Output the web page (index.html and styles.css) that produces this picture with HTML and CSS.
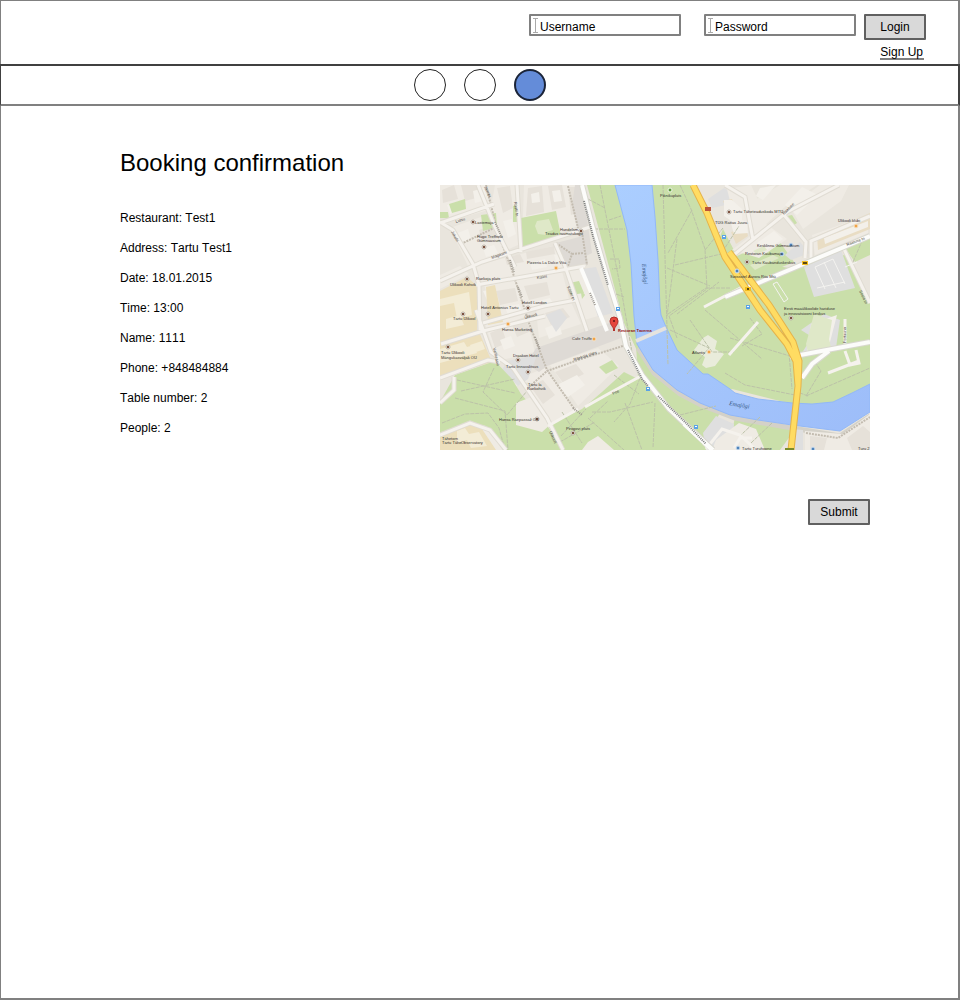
FILE: index.html
```html
<!DOCTYPE html>
<html lang="en">
<head>
<meta charset="utf-8">
<meta name="viewport" content="width=device-width, initial-scale=1">
<title>Booking confirmation</title>
<link rel="stylesheet" href="styles.css">
</head>
<body>
<div class="page">
  <header class="header">
    <form class="login">
      <label class="field">
        <svg class="caret" width="5" height="15" viewBox="0 0 5 15" aria-hidden="true"><path d="M0 .5h5M0 14.5h5M2.500 0v15"/></svg>
        <input class="field-input" type="text" placeholder="Username" aria-label="Username">
      </label>
      <label class="field">
        <svg class="caret" width="5" height="15" viewBox="0 0 5 15" aria-hidden="true"><path d="M0 .5h5M0 14.5h5M2.500 0v15"/></svg>
        <input class="field-input" type="password" placeholder="Password" aria-label="Password">
      </label>
      <div class="account">
        <button class="button" type="button">Login</button>
        <a class="signup" href="#">Sign Up</a>
      </div>
    </form>
  </header>
  <nav class="steps" aria-label="Booking progress">
    <span class="step"></span>
    <span class="step"></span>
    <span class="step step-current" aria-current="step"></span>
  </nav>
  <main class="main">
    <h1 class="title">Booking confirmation</h1>
    <div class="booking">
      <ul class="details">
        <li>Restaurant: Test1</li>
        <li>Address: Tartu Test1</li>
        <li>Date: 18.01.2015</li>
        <li>Time: 13:00</li>
        <li>Name: 1111</li>
        <li>Phone: +848484884</li>
        <li>Table number: 2</li>
        <li>People: 2</li>
      </ul>
      <svg class="map" viewBox="440 185 430 265" role="img" aria-label="Map of the restaurant location">
        <defs>
          <linearGradient id="water" x1="0" y1="0" x2="1" y2="1"><stop offset="0" stop-color="#abceff"/><stop offset="1" stop-color="#9dbdf9"/></linearGradient>
        </defs>
        <rect class="land" x="440" y="185" width="430" height="265"/>

        <!-- Blocks and buildings, west bank -->
        <g class="block">
          <path d="M440 185h47l5 24-42 12-10-8zM495 185h21l2 60-16 7-12-40zM524 185h56l7 38-65 22zM450 228l42-15 12 40-36 13zM473 266l108-27 5 27-104 16zM484 284l78-13 8 32-76 17zM568 270l12-2 18 48-17 5zM485 324l40-12 10 40-38 9zM536 310l35-8 10 22-42 14zM440 275l20-9 9 8-29 15zM497 374l26-12 10 18-22 8zM525 376l20-8 31 42-28 16zM550 365l48-17 21 18-41 40z"/>
        </g>
        <g class="shade">
          <path d="M442 190l12-5 4 14-15 4zM461 185l16 0 3 12-15 4zM497 188l13-2 3 22-10 5zM528 188l14-2 2 26-18 4zM548 186l14-1 4 22-14 3zM568 187l9 0 3 25-9 3zM479 230l17-5 5 12-19 5zM505 258l15-4 4 8-17 3zM526 252l28-6 1 8-28 5zM496 291l19-3 3 13-18 4zM524 286l23-4 3 13-21 5zM490 333l12-5 5 15-12 5zM511 322l14-5 6 14-14 6zM545 313l18-5 7 9-19 8zM530 386l13-6 12 15-12 9zM555 372l21-8 8 10-20 10z"/>
        </g>
        <g class="building">
          <path d="M447 205l12-4 3 8-12 5zM473 191l11-3 3 12-12 3zM503 221l9-2 4 15-8 4zM531 194l8-2 1 10-8 1zM552 191l8-1 2 11-8 1zM455 234l13-5 3 10-11 4zM483 248l11-3 4 8-12 4zM530 263l15-4 2 8-15 3zM554 255l14-3 2 7-14 3zM483 291l11-2 4 15-8 3zM505 307l14-3 3 7-14 4zM531 303l19-5 4 7-20 6zM545 328l14-5 3 11-13 5zM500 340l11-4 4 10-11 4zM557 385l20-10 8 10-17 12z"/>
        </g>
        <path class="plaza" d="M556 243l27-7 5 28-22 5zM575 185h7l10 68-8 4-12-52zM536 348l82-28 3 18-74 28-8 6-12-8z"/>
        <path class="paved" d="M582 269l14-2 17 46-15 4zM440 337l30-8 3 8-33 8zM507 361l30-6-9 24-10 7-16-16zM546 315l14-6 7 9-11 14z"/>
        <path class="gold" d="M440 291l27-14 10 9v48l-37 12zM440 341l39-9 13 30-52 16zM486 287l9-2 8 37-15 3z"/>
        <path class="gold-light" d="M440 299l29-7 3 23-15 4-3-16-14 3zM446 319l14-4 4 10-18 4zM440 349l24-7 3 5 7-2 3 8-37 10zM470 345l12-4 3 8-12 4z"/>

        <!-- Parks -->
        <g class="park">
          <path d="M449 204l16-5 1 10-14 4zM440 212l8 0 1 6-9 0zM481 215l15-2 1 14-14 4zM513 206l4-1v17h-4zM521 218l35-7 5 25-40 12zM569 283l10-2 5 12-13 2zM599 367l13-7 6 8-12 6zM580 287l5 8-3 4z"/>
          <path d="M455 375l40-14 17 18 9 15 18 20 25 36H440v-48zM549 425l33-16 20-17 22-20 16 8 28 31 34 33 6 6H558z"/>
          <path d="M587 185h104l12 23 26 50 60 10 81-19v141l-39 14H792l-60-15-46 32-23-15-39-83z"/>
          <path d="M636 345l18 26 26 21 40 21-21 37-61-72z"/>
          <path d="M735 417l56 10v8l-11 15h-17l-8-16-22-7z"/>
        </g>
        <path class="court" d="M537 221l12-2 4 11-7 2v3l-8-1-3-8z"/>
        <path class="land" d="M696 185h174v49l-78 25-61-4zM844 248l26-11v65z"/>
        <path class="park" d="M723 229l14 27 40-18 17 24-70 29-13-32zM845 248l25-10v17l-15 7zM787 216l5-1 5 8-3 2z"/>
        <path class="paved" d="M804 267l37-17 14 38-41 9zM785 255l15-13 10 11-19 7zM801 330l23-16 16 6-4 28-36 8 12-19zM708 199l16-11 14 8-8 8-18 4z"/>
        <path class="block" d="M727 189l24-4 14 30-27 18zM747 205l33-20h37l-30 20-32 29zM790 207l30-22h29l-8 16-38 28zM732 250l34-26 21 15-28 19zM812 235l56-20v18l-53 22z"/>
        <path class="tan" d="M817 236l53-23v16l-52 21zM731 232l15-4 2 8-12 8zM723 201l9-2 4 9-9 3z"/>
        <path class="building" d="M724 200l8 0 10 9 0 11 5 2 1 11-14 1-4-14-6-4zM760 188l16-3-13 15-7-4zM785 205l17-18 16 8-21 20zM757 243l17-12 9 8-16 11zM811 324l26-9-7 27-23 10zM824 238l44-17v6l-43 17z"/>
        <path class="court" d="M814 314l18 6-4 26-20 6-2-8zM820 341l9-2 2 8-9 3zM750 265l23-10 6 3-24 12zM753 251l11-5 3 4-10 4z"/>
        <path class="building-park" d="M703 338l5-3 9 6-2 8 9 5-9 12-9 2-4-3 3-8-11-7z"/>

        <!-- River -->
        <path class="bank" d="M638 348l16 25 26 21 21 11 34 13 57 10 48 8 30-20"/>
        <path class="river" d="M615 185h37l3 32 3 43 2 47 1 8 5 12 11 23 26 24h5l22 15 5 4 23 6 34 4 20 1 21-2 19-9 18-9v28l-30 19-48-6-34-5-28-5-30-12-23-13-24-20-16-26-3-28-3-52-4-34z"/>

        <!-- South shore and lower west -->
        <path class="paved" d="M703 433l13-17 18 8-2 26h-26zM791 429l12 1v20h-13z"/>
        <path class="block" d="M805 431l38 3 27-20v36h-65zM716 440l23-17 17 6 9 21h-53zM588 442l10-6 16 14h-32zM516 403l18-7 18 27-10 9-26-7zM440 434l30-11 16 3 17 24h-63z"/>
        <path class="shade" d="M810 436l17 2-3 12h-14zM847 438l16-12 7 6v18h-18z"/>
        <path class="gold" d="M440 437l20-9 9-4 13 5 14 21h-56z"/>
        <path class="gold-light" d="M457 431l8-3 4 6 10-2 8 14-16 2-4-8-10 3z"/>

        <!-- Park paths -->
        <g class="path">
          <path d="M457 380l58 13M461 391l54-12M494 368l-11 24 24 23 20-24M455 398l50 13 3 39M442 423l23-9 23-1 11 15 6 22M600 185l10 50 13 65 10 58M588 199l17 9M594 229h31M609 220l12-4M610 259l9 0 1 9-8 1M616 294l8 3M663 185l5 180M680 185l11 24 14 40 2 40-38 27 8 22M692 210l-24 43M677 239l-10 77M667 268l43 18M675 265l46-11 18-28M668 314l38-26M706 288l25 0M705 250l18-22M670 330l39 18-22 26M690 320l22 32 22 0M705 310l57 49M677 314l42-32M730 338l60 18M725 373l20 12 50 10M789 353l3 36M815 362l6 9-15 25 64-28M808 396l-13-5M640 378l-10 26-16 18M655 403l-2 45M592 412l18 0 43-10M625 403l17 47M588 418l36 32M614 375l25 19M680 415l36-9M590 418l18-17M560 442l35-20M562 412l20 31M750 318l12 16-20 12M735 296l10-10 8 7M760 417l-19 18M772 423l-21 20M853 262l9-21M561 436l25-27"/>
        </g>
        <g class="path path-wide"><path d="M486 185l12 49 13 33 18 56 18 47 28 40M461 244l35-17M529 387l18-16 34-12 45-14M568 186l10 42M556 243l16 11-4 12M572 254l12-1M582 232l5 33M806 433l32 5 32-21"/></g>

        <!-- Streets -->
        <g class="street-edge">
          <path d="M440 281l42-19 108-35M440 223l54-19M440 222l13 8 20 34 6 21 1 45M478 185l17 42 20 40M517 185l4 67M476 285l109-19M555 243l10 23 22 65M483 323l61-17 32-6M476 310l15 42 22 16 34 50 16 32M441 344l42-13 62-15M440 378l48-18 12 2M440 403l14-13v-13M440 435l30-12 20 7 16 20M725 262l62-50 52-27M784 215l22 27-1 16M725 185l20 12 8 43M811 258v-17l59-25M844 249l26 54"/>
        </g>
        <g class="street">
          <path d="M440 281l42-19 108-35M440 223l54-19M440 222l13 8 20 34 6 21 1 45M478 185l17 42 20 40M517 185l4 67M476 285l109-19M555 243l10 23 22 65M483 323l61-17 32-6M476 310l15 42 22 16 34 50 16 32M441 344l42-13 62-15M440 378l48-18 12 2M440 403l14-13v-13M440 435l30-12 20 7 16 20M725 262l62-50 52-27M784 215l22 27-1 16M725 185l20 12 8 43M811 258v-17l59-25M844 249l26 54"/>
          <path d="M729 355l29-33M704 307l42-22M585 407l23-13 33-18M548 426l30-17M706 449l16-20 18 6 16 15M828 373l31-12M845 351l5 14 9-2-3-13M845 319v30M734 448l6-10 12 0"/>
        </g>
        <path class="main-street-edge" d="M790 357l26-5 54-10M802 378l10-14 17-13M725 297l88-37 57-24"/>
        <path class="main-street" d="M790 357l26-5 54-10M802 378l10-14 17-13M725 297l88-37 57-24"/>
        <path class="main-street-edge" d="M582 185l10 40 14 48 14 45 6 28 16 29 27 34 44 41"/>
        <path class="main-street" d="M582 185l10 40 14 48 14 45 6 28 16 29 27 34 44 41M581 268l26 63M684 424l28 26"/>
        <path class="parking" d="M815 267l10 22M824 262l12 26M833 259l12 25M815 267l18-8M817 288l28-6M845 267l12-5M773 284l11 18 4-3-11-17z"/>
        <path class="bridge" d="M636 341l30-13"/>

        <!-- Highway -->
        <path class="highway-edge" d="M693 185l14 28 18 44 35 53 27 34 9 17 2 25-7 64M729 252l40 53 24 37 6 19-1 25"/>
        <path class="highway" d="M693 185l14 28 18 44 35 53 27 34 9 17 2 25-7 64M729 252l40 53 24 37 6 19-1 25"/>
        <path class="exit" d="M785 449h9"/>

        <!-- Street name runs -->
        <path class="name-run" d="M584 201l9 35 15 49M628 350l14 29 6 7M658 396l29 28 19 20"/>
        <path class="name-run name-run-light" d="M495 222l7 16M510 260l4 12M518 287l4 10M535 337l5 13M573 408l9 7M590 293l5 12"/>

        <!-- Markers -->
        <g class="stop"><path d="M616 307h4v4h-4zM722 235h4v4h-4zM746 305h4v4h-4zM646 387h4v4h-4zM694 425h4v4h-4z"/></g>
        <g class="stop-inner"><path d="M617 308h2v1h-2zM723 236h2v1h-2zM747 306h2v1h-2zM647 388h2v1h-2zM695 426h2v1h-2z"/></g>
        <path class="shield-red" d="M705 207h6v4h-6z"/>
        <path class="shield" d="M802 261h6v4h-6zM745 287h6v4h-6z"/>
        <path class="shield-text" d="M803 263h4M747 289h2"/>
        <g class="place">
          <circle cx="473" cy="222" r="2"/><circle cx="484" cy="247" r="2"/><circle cx="467" cy="279" r="2"/><circle cx="463" cy="314" r="2"/><circle cx="488" cy="314" r="2"/><circle cx="528" cy="308" r="2"/><circle cx="581" cy="231" r="2"/><circle cx="448" cy="347" r="2"/><circle cx="518" cy="360" r="2"/><circle cx="528" cy="372" r="2"/><circle cx="537" cy="419" r="2"/><circle cx="573" cy="433" r="2"/><circle cx="729" cy="212" r="2"/><circle cx="747" cy="262" r="2"/><circle cx="791" cy="318" r="2"/>
        </g>
        <g class="place-core"><path d="M472 222h2M483 247h2M466 279h2M462 314h2M487 314h2M527 308h2M580 231h2M447 347h2M517 360h2M527 372h2M536 419h2M572 433h2M728 212h2M746 262h2M790 318h2"/></g>
        <g class="place place-park"><circle cx="670" cy="190" r="2"/></g>
        <g class="place place-food"><circle cx="556" cy="268" r="2"/><circle cx="508" cy="324" r="2"/><circle cx="594" cy="339" r="2"/><circle cx="709" cy="352" r="2"/><circle cx="856" cy="226" r="2"/></g>
        <g class="place place-blue"><circle cx="791" cy="245" r="2"/><circle cx="782" cy="254" r="2"/><circle cx="737" cy="271" r="2"/><circle cx="738" cy="448" r="2"/><circle cx="813" cy="449" r="2"/></g>

        <!-- Labels -->
        <g class="label">
          <text x="475" y="224">Lastemaja</text>
          <text x="477" y="238">Hugo Treffneri</text><text x="477" y="242">Gümnaasium</text>
          <text x="560" y="231">Handelsm.</text><text x="545" y="235">Teadus raamatukogu</text>
          <text x="527" y="264">Pizzeria La Dolce Vita</text>
          <text x="476" y="280">Raekoja plats</text>
          <text x="450" y="286">Ülikooli Kohvik</text>
          <text x="522" y="304">Hotell London</text>
          <text x="481" y="309">Hotell Antonius Tartu</text>
          <text x="453" y="320">Tartu Ülikool</text>
          <text x="502" y="331">Hansa Marketing</text>
          <text x="572" y="340">Cafe Truffe</text>
          <text x="441" y="354">Tartu Ülikooli</text><text x="441" y="359">Mängukasväljak OÜ</text>
          <text x="513" y="357">Draakon Hotel</text>
          <text x="506" y="368">Tartu linnavalitsus</text>
          <text x="528" y="386">Tartu la</text><text x="527" y="390">Raekohvik</text>
          <text x="499" y="421">Hansa Raepassaž OÜ</text>
          <text x="566" y="430">Pirogovi plats</text>
          <text x="442" y="440">Tähetorn</text><text x="442" y="444">Tartu Tähe</text><text x="461" y="444">Observatory</text>
          <text x="660" y="197">Piknikuplats</text>
          <text x="733" y="213">Tartu Täheteaduskoda MTÜ</text>
          <text x="715" y="224">TÜG Rattas Juura</text>
          <text x="838" y="222">Ülikooli klubi</text>
          <text x="757" y="247">Kesklinna Gümnaasium</text>
          <text x="745" y="255">Restoran Kaubamaja</text>
          <text x="752" y="264">Tartu Kaubanduskeskus</text>
          <text x="730" y="278">Swissotel Aurora Riia Mtü</text>
          <text x="784" y="310">Eesti maaülikoolide hariduse</text><text x="784" y="315">ja innovatsiooni keskus</text>
          <text x="692" y="354">Atlantis</text>
          <text x="742" y="450">Tartu Turuhoone</text><text x="858" y="450">Turu 2</text>
        </g>
        <g class="label label-street">
          <text transform="translate(484 187) rotate(65)">Jakobi</text>
          <text transform="translate(514 202) rotate(83)">Rüütli tn</text>
          <text transform="translate(456 223) rotate(-17)">Lutsu</text>
          <text transform="translate(451 232) rotate(60)">Jakobi</text>
          <text transform="translate(492 259) rotate(-20)">Magasini</text>
          <text transform="translate(537 279) rotate(-8)">Küüni</text>
          <text transform="translate(567 287) rotate(68)">Küütri tn</text>
          <text transform="translate(525 319) rotate(-15)">Ülikooli</text>
          <text transform="translate(493 348) rotate(78)">Vallikraavi</text>
          <text transform="translate(574 361) rotate(-18)">Raekoja plats</text>
          <text transform="translate(613 395) rotate(-25)">Poe</text>
          <text transform="translate(549 432) rotate(65)">Ülikooli</text>
          <text transform="translate(784 215) rotate(-45)">Raatuse</text>
          <text transform="translate(847 246) rotate(-20)">Raatuse tn</text>
          <text transform="translate(859 291) rotate(65)">Soola tn</text>
          <text transform="translate(846 343) rotate(-90)">Fortuuna</text>
        </g>
        <text class="water-name" transform="translate(642 264) rotate(85)">Emajõgi</text>
        <text class="water-name" transform="translate(729 405) rotate(10)">Emajõgi</text>
        <path class="pin" d="M614 330c-1-4-4-5-4-9a4 4 0 0 1 8 0c0 4-3 5-4 9z"/>
        <circle class="pin-core" cx="614" cy="321" r="1"/>
        <path class="pin-foot" d="M613 329h2v2h-2z"/>
        <text class="venue" x="618" y="332">Restoran Taverna</text>
      </svg>
    </div>
    <div class="actions"><button class="button" type="button">Submit</button></div>
  </main>
</div>
</body>
</html>
```
FILE: styles.css
```css
* { box-sizing: border-box; }

body {
  margin: 0;
  background: #fff;
  color: #000;
  font-family: "Liberation Sans", Arial, sans-serif;
  font-size: 12px;
  font-kerning: none;
}

.page {
  display: flex;
  flex-direction: column;
  min-height: 100vh;
  border: 2px solid #808080;
  border-width: 1px 2px 2px 1px;
}

.header {
  min-height: 63px;
  padding: 13px 32px 0 16px;
}

.login {
  display: flex;
  justify-content: flex-end;
  align-items: flex-start;
}

.field {
  display: flex;
  align-items: center;
  width: 152px;
  height: 22px;
  padding-left: 2px;
  border: 2px solid #808080;
  border-radius: 1px;
}

.field + .field { margin-left: 23px; }

.caret {
  flex: none;
  fill: none;
  stroke: #aaa;
}

.field-input {
  width: 100%;
  min-width: 0;
  height: 18px;
  padding: 3px 0 0 2px;
  border: 0;
  outline: 0;
  background: none;
  font: inherit;
  font-kerning: none;
}

.field-input::placeholder {
  color: #000;
  opacity: 1;
}

.account {
  display: flex;
  flex-direction: column;
  align-items: flex-end;
  gap: 6px;
  margin-left: 8px;
}

.button {
  width: 62px;
  height: 26px;
  padding: 0;
  border: 2px solid #606060;
  border-radius: 1px;
  background: #d9d9d9;
  color: #000;
  font: inherit;
  font-kerning: none;
}

.signup {
  margin-right: 2px;
  padding-right: 1px;
  border-bottom: 2px solid #808080;
  color: #000;
  line-height: 12px;
  text-decoration: none;
}

.steps {
  display: flex;
  justify-content: center;
  align-items: center;
  gap: 18px;
  height: 42px;
  margin: 0 -2px 0 -1px;
  border: 2px solid #404040;
  border-width: 2px 2px 2px 1px;
  border-bottom-color: #808080;
}

.step {
  width: 32px;
  height: 32px;
  border: 1px solid #222;
  border-radius: 50%;
  background: #fff;
}

.step-current {
  border: 2px solid #1b2438;
  background: #648cd9;
}

.main { padding: 43px 88px 40px 119px; }

.title {
  margin: 0 0 8px;
  font-size: 24px;
  font-weight: 400;
  line-height: 28px;
}

.booking {
  display: grid;
  grid-template-columns: 320px minmax(0, 1fr);
  align-items: start;
}

.details {
  margin: 0;
  padding: 18px 0 0;
  list-style: none;
  line-height: 30px;
}

.map {
  display: block;
  width: 100%;
}

.actions {
  display: flex;
  justify-content: flex-end;
  margin-top: 49px;
}

/* Map */
.land { fill: #e9e5dd; }
.block { fill: #efebe4; }
.shade { fill: #e6e1d9; }
.building { fill: #f3f0ea; }
.building-park { fill: #e9ecdb; }
.plaza { fill: #dedad5; }
.paved { fill: #dfdfdf; }
.gold { fill: #ecdfbc; }
.gold-light { fill: #f3ecd6; }
.tan { fill: #e9ddc4; }
.park { fill: #cadfaa; }
.court { fill: #dfe8c8; }
.bank { fill: none; stroke: #d4d1c8; stroke-width: 5; }
.river { fill: url(#water); stroke: #92b8f7; stroke-width: 1; }
.path { fill: none; stroke: #bcc2a8; stroke-width: 1; stroke-dasharray: 4 1; }
.path-wide { stroke: #c3bcb0; stroke-width: 2; stroke-dasharray: 2 1; }
.street-edge { fill: none; stroke: #e0dcd3; stroke-width: 5; }
.street { fill: none; stroke: #f5f2ed; stroke-width: 3; }
.main-street-edge { fill: none; stroke: #d9d8cf; stroke-width: 6; }
.main-street { fill: none; stroke: #fcfcfa; stroke-width: 4; }
.parking { fill: none; stroke: #f4f3f0; stroke-width: 1; }
.bridge { fill: none; stroke: #e5e3df; stroke-width: 4; }
.highway-edge { fill: none; stroke: #e5b34b; stroke-width: 7; }
.highway { fill: none; stroke: #ffdc62; stroke-width: 5; }
.exit { stroke: #7a8b2c; stroke-width: 2; }
.name-run { fill: none; stroke: #808080; stroke-width: 2; stroke-dasharray: 1 1; }
.name-run-light { stroke: #9b968e; }
.stop { fill: #5ba3e6; }
.stop-inner { fill: #fff; }
.shield-red { fill: #bb5339; }
.shield { fill: #f3bd20; }
.shield-text { stroke: #5c4810; stroke-width: 2; }
.place { fill: #f8f6f2; stroke: #b9b0a5; stroke-width: 1; }
.place-core { stroke: #7c5240; stroke-width: 2; }
.place-park { fill: #5d9a3c; stroke: #f1f5e8; }
.place-food { fill: #f2a345; stroke: #f3e4cf; }
.place-blue { fill: #4f83bb; stroke: #d7e4f0; }
.label { fill: #332f2b; font-size: 4px; }
.label-street { fill: #504b46; }
.water-name { fill: #34557f; font-family: "Liberation Serif", "Times New Roman", serif; font-size: 6px; font-style: italic; }
.pin { fill: #e5463c; stroke: #b3312b; stroke-width: 1; }
.pin-core { fill: #5e1512; }
.pin-foot { fill: #b3312b; }
.venue { fill: #8d1010; font-size: 4px; font-weight: 700; }
```
